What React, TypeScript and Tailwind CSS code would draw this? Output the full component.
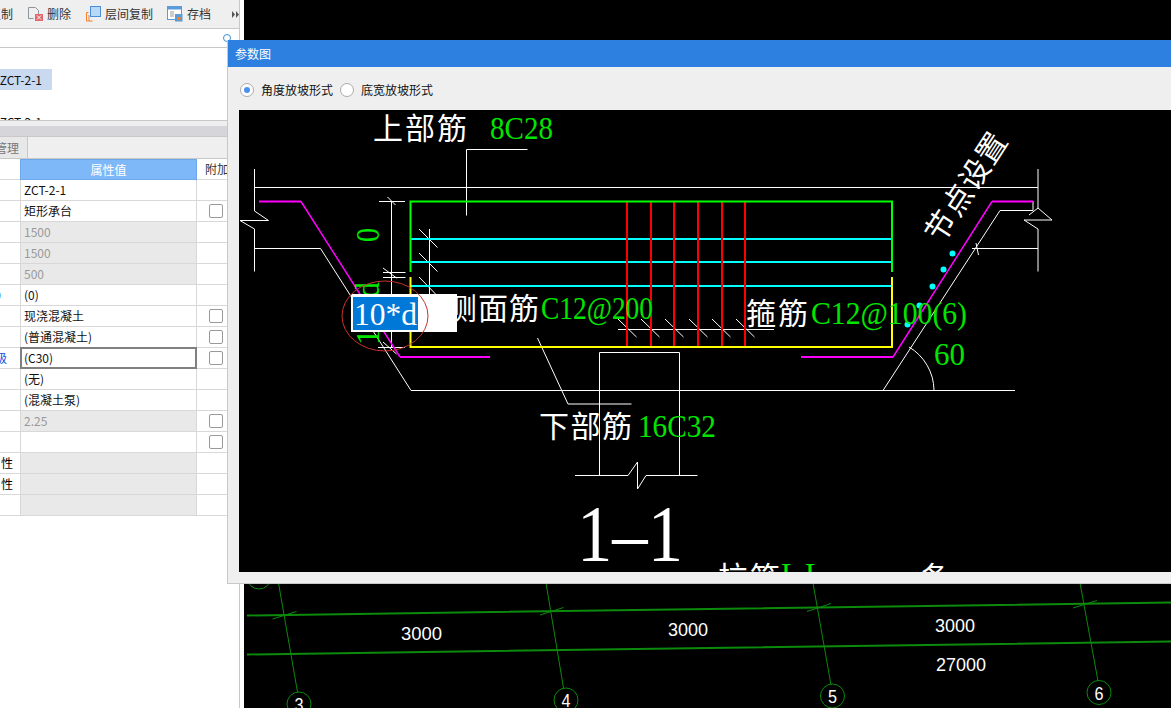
const cjk = "font-['Noto_Sans_CJK_SC','Noto_Sans',sans-serif]";
const serif = "'Liberation Serif','Noto Sans CJK SC',serif";
const cjkSvg = "'Noto Sans CJK SC',serif";

type Row = {
  label?: string;
  labelClass?: string;
  value?: string;
  grey?: boolean;
  check?: boolean;
  active?: boolean;
};

const rows: Row[] = [
  { value: "ZCT-2-1" },
  { value: "矩形承台", check: true },
  { value: "1500", grey: true },
  { value: "1500", grey: true },
  { value: "500", grey: true },
  { label: "0", labelClass: "pr-[19px] text-[#1a50e0]", value: "(0)" },
  { value: "现浇混凝土", check: true },
  { value: "(普通混凝土)", check: true },
  { label: "级", labelClass: "pr-[13px] text-[#1a50e0]", value: "(C30)", check: true, active: true },
  { value: "(无)" },
  { value: "(混凝土泵)" },
  { value: "2.25", grey: true, check: true },
  { value: "", check: true },
  { label: "性", labelClass: "pr-[7px] text-black", value: "", grey: true },
  { label: "性", labelClass: "pr-[7px] text-black", value: "", grey: true },
  { value: "", grey: true },
];

// white linework of the section drawing, in page coordinates
const whiteLines = [
  "M254.5 187.5H1038",
  "M254.5 169V211L268.5 220.5H240L254.5 229V271.5",
  "M254.5 248.5H320.5L411 390.5H1015",
  "M466.5 215.5V149.5H527.5",
  "M391.5 201V347",
  "M379 201.5H405M383 272.5H405.5M383 277.5H405.5M378 347.5H405",
  "M387.5 197L395.5 205M383 268L396.5 278M383 342L396.5 354",
  "M429.5 229V295",
  "M419 229L437.5 247.5M419 253L437.5 271.5M419 277L437.5 296",
  "M618 329.5H774",
  "M618 319L636.5 337M641 319L659.5 337M665 319L683.5 337M689 319L707.5 337M712 319L730.5 337M736 319L754.5 337",
  "M1038 169V208L1052 220H1024L1038 229V271.5M1029 215L1038 208",
  "M972 248.5H1038M976 243L978.5 255",
  "M1033 201V210.5H1000L883 390.5",
  "M909 347A51 51 0 0 1 934 390",
  "M599.5 475V352.5H679.5V475",
  "M575 475.5H628L637.5 462V489L646 475.5H697.5",
  "M537.5 338L568 404H631.5",
];

const redBars = [627, 651, 674, 698, 722, 745];
const cyanBars = [239, 262, 286];
const cyanDots = [
  [952.5, 253.5],
  [943.5, 269.5],
  [932.5, 286.5],
  [919.5, 305.5],
  [907.5, 324.5],
];

const axes = [
  { line: "M278.5 583L297.5 692", tick: "M272.5 619L296.5 611.5", cx: 299, cy: 704, n: "3" },
  { line: "M546 583L563.5 688", tick: "M540 615L563.5 607.5", cx: 566, cy: 700, n: "4" },
  { line: "M813 583L831 685", tick: "M807 611.5L831 603.5", cx: 832.5, cy: 696, n: "5" },
  { line: "M1080 583L1098 681", tick: "M1073 608L1097 600.5", cx: 1099, cy: 692.5, n: "6" },
];

function Toolbar() {
  return (
    <div className="flex h-[29px] shrink-0 items-center overflow-hidden border-b border-[#c8c8c8] bg-[#efefef] text-[12px] text-[#333]">
      <span className="ml-[-11px] w-[39px] shrink-0">复制</span>
      {/* delete */}
      <svg width="15" height="16" viewBox="0 0 15 16" className="shrink-0">
        <path d="M.5 1.5h7l3 3v4M.5 1.5v11h5" fill="none" stroke="#8a979f" />
        <rect x="7" y="8" width="8" height="7" fill="#e0686c" />
        <path d="M9 9.5l4 4M13 9.5l-4 4" stroke="#fff" />
      </svg>
      <span className="ml-[4px] w-[39px] shrink-0">删除</span>
      {/* copy between floors */}
      <svg width="15" height="16" viewBox="0 0 15 16" className="shrink-0">
        <path d="M.5 15V6.5h2M.5 15h6" fill="none" stroke="#f08030" />
        <path d="M3 15V9" stroke="#f08030" />
        <rect x="4.5" y=".5" width="10" height="10" fill="#b8d8f8" stroke="#4a90d8" />
      </svg>
      <span className="ml-[4px] w-[62px] shrink-0">层间复制</span>
      {/* save */}
      <svg width="16" height="16" viewBox="0 0 16 16" className="shrink-0">
        <rect x=".5" y=".5" width="14" height="13" fill="#fff" stroke="#5b9bd8" />
        <rect x="1" y="1" width="13" height="2.5" fill="#5b9bd8" />
        <path d="M3 6h4M3 8h4M3 10h4" stroke="#999" />
        <rect x="8" y="8" width="7.5" height="7.5" fill="#5b9bd8" />
        <rect x="10" y="11" width="3.5" height="3" fill="#f08030" />
      </svg>
      <span className="ml-[4px] w-[45px] shrink-0">存档</span>
      <svg width="7" height="7" viewBox="0 0 7 7" className="shrink-0">
        <path d="M0 0l3 3.5L0 7zM4 0l3 3.5L4 7z" fill="#555" />
      </svg>
    </div>
  );
}

function PropertyRow({ row }: { row: Row }) {
  const valueClass = row.active
    ? "relative -ml-px -mt-px h-[22px] w-[177px] border-2 border-[#808080] bg-white pl-[2px] text-[#111]"
    : `w-[176px] border-r border-[#d8d8d8] pl-[3px] ${row.grey ? "bg-[#e9e9e9] text-[#999]" : "text-[#111]"}`;

  return (
    <div className="flex h-[21px] border-b border-[#d8d8d8]">
      <div
        className={`flex w-[21px] shrink-0 items-center justify-end overflow-hidden border-r border-[#d8d8d8] whitespace-nowrap ${row.labelClass ?? ""}`}
      >
        {row.label}
      </div>
      <div className={`flex shrink-0 items-center ${valueClass}`}>{row.value}</div>
      <div className="flex flex-1 items-center pl-[12px]">
        {row.check && <span className="h-[14px] w-[14px] rounded-[2px] border border-[#999] bg-white" />}
      </div>
    </div>
  );
}

function LeftPanel() {
  return (
    <aside className={`flex h-full w-[240px] shrink-0 flex-col border-r border-[#c8c8c8] bg-white text-[12px] ${cjk}`}>
      <Toolbar />
      <div className="flex h-[19px] shrink-0 items-center justify-end border-b border-[#c8c8c8] pr-[8px]">
        <span className="h-[8px] w-[8px] rounded-full border border-[#3f8fd0]" />
      </div>
      <div className="h-[73px] shrink-0 overflow-hidden border-b border-[#c8c8c8] pt-[21px] text-[#111]">
        <div className="flex h-[21px] w-[52px] items-center justify-end bg-[#c8d9f0] pr-[10px] whitespace-nowrap">ZCT-2-1</div>
        <div className="mt-[23px] flex w-[52px] justify-end pr-[10px] whitespace-nowrap">ZCT-2-1</div>
      </div>
      <div className="h-[5px] shrink-0 bg-[#efefef]" />
      <div className="h-[11px] shrink-0 border-b border-[#c8c8c8] bg-[#d5d5da]" />
      <div className="flex h-[22px] shrink-0 border-b border-[#c8c8c8] bg-[#efefef]">
        <div className="flex w-[28px] items-center justify-end overflow-hidden border-r border-[#c8c8c8] bg-[#e8e8e8] pr-[8px] whitespace-nowrap text-[#777]">
          管理
        </div>
      </div>
      <div className="flex h-[21px] shrink-0">
        <div className="w-[20px] shrink-0 border-b border-[#d8d8d8]" />
        <div className="flex w-[177px] shrink-0 items-center justify-center border border-[#6fa8e8] bg-[#7fb8f8] text-white">属性值</div>
        <div className="flex-1 border-b border-[#d8d8d8] pl-[8px] leading-[20px] whitespace-nowrap text-[#333]">附加</div>
      </div>
      {rows.map((row, i) => (
        <PropertyRow key={i} row={row} />
      ))}
    </aside>
  );
}

function AxisPlan() {
  return (
    <svg viewBox="244 0 927 708" className="block h-full w-full">
      <g fill="none" stroke="#0c8a0c">
        <path d="M247 615.5L1171 602.5M247 654.5L1171 641.5" strokeWidth="2" />
        {axes.map((a) => (
          <g key={a.n}>
            <path d={a.line} />
            <path d={a.tick} />
            <circle cx={a.cx} cy={a.cy} r="12" />
          </g>
        ))}
        <circle cx="259" cy="577" r="12" />
      </g>
      <g fill="#fff" fontFamily="'Liberation Sans',sans-serif" fontSize="19">
        <text x="401" y="640" textLength="41" lengthAdjust="spacingAndGlyphs">3000</text>
        <text x="668" y="636" textLength="40" lengthAdjust="spacingAndGlyphs">3000</text>
        <text x="935" y="632" textLength="40" lengthAdjust="spacingAndGlyphs">3000</text>
        <text x="936" y="671" textLength="50" lengthAdjust="spacingAndGlyphs">27000</text>
        {axes.map((a) => (
          <text key={a.n} x={a.cx - 4.5} y={a.cy + 7} textLength="9" lengthAdjust="spacingAndGlyphs">{a.n}</text>
        ))}
      </g>
    </svg>
  );
}

function SectionDrawing() {
  return (
    <svg viewBox="239 110 932 462" className="block h-[462px] w-[932px] shrink-0 bg-black">
      <g fill="none" stroke="#fff">
        {whiteLines.map((d) => (
          <path key={d} d={d} />
        ))}
      </g>
      <path d="M259 201.5H301M400 357H490M801 357H893M992 201.5H1033" fill="none" stroke="#ff00ff" strokeWidth="2" />
      <path d="M301 201.5L400 357M893 357L992 201.5" fill="none" stroke="#ff00ff" strokeWidth="1.5" />
      {cyanBars.map((y) => (
        <path key={y} d={`M410 ${y}H892`} stroke="#00ffff" strokeWidth="2" />
      ))}
      {redBars.map((x) => (
        <path key={x} d={`M${x} 201V347`} stroke="#ff0000" strokeWidth="2" />
      ))}
      <path d="M410.5 272V201.5H892V272" fill="none" stroke="#00ff00" strokeWidth="2" />
      <path d="M410.5 277V347H892V277" fill="none" stroke="#ffff00" strokeWidth="2" />
      {cyanDots.map(([x, y]) => (
        <circle key={x} cx={x} cy={y} r="3" fill="#00ffff" />
      ))}

      <g fill="#fff" fontFamily={cjkSvg} fontSize="30">
        <text x="373" y="139" textLength="94">上部筋</text>
        <text x="447" y="319" textLength="92">侧面筋</text>
        <text x="746" y="324" textLength="62">箍筋</text>
        <text x="539" y="437" textLength="93">下部筋</text>
        <text x="718" y="588" textLength="62">拉筋</text>
        <text x="920" y="588">条</text>
        <text x="967" y="197" textAnchor="middle" letterSpacing="1" transform="rotate(-57 967 187)">节点设置</text>
      </g>
      <g fill="#00e600" fontFamily={serif} fontSize="31">
        <text x="490" y="139" textLength="63" lengthAdjust="spacingAndGlyphs">8C28</text>
        <text x="541" y="319" textLength="112" lengthAdjust="spacingAndGlyphs">C12@200</text>
        <text x="811" y="324" textLength="156" lengthAdjust="spacingAndGlyphs">C12@100(6)</text>
        <text x="934" y="365" textLength="31" lengthAdjust="spacingAndGlyphs">60</text>
        <text x="638" y="437" textLength="78" lengthAdjust="spacingAndGlyphs">16C32</text>
        <text x="781" y="585" letterSpacing="5">LL</text>
        <text x="379" y="242" fontSize="33" textLength="14" lengthAdjust="spacingAndGlyphs" transform="rotate(-90 379 242)">0</text>
        <text x="379" y="345" fontSize="33" textLength="63" lengthAdjust="spacingAndGlyphs" transform="rotate(-90 379 345)">10*d</text>
      </g>
      <text x="577" y="561" fill="#fff" fontFamily={serif} fontSize="80" textLength="106" lengthAdjust="spacingAndGlyphs">1–1</text>

      {/* in-place dimension editor */}
      <rect x="351" y="294" width="106" height="38" fill="#fff" />
      <rect x="353" y="297" width="65" height="33" fill="#0078d7" />
      <text x="354" y="325" fill="#fff" fontFamily={serif} fontSize="31" textLength="63" lengthAdjust="spacingAndGlyphs">10*d</text>
      <ellipse cx="385" cy="316" rx="43" ry="35" fill="none" stroke="#c83232" />
    </svg>
  );
}

function ParamDialog() {
  return (
    <div className={`absolute top-[40px] left-[227px] flex h-[544px] w-[944px] flex-col border-b border-l border-[#c8c8c8] bg-[#efefef] ${cjk}`}>
      <div className="flex h-[27px] shrink-0 items-center bg-[#2d7fe0] pl-[7px] text-[12px] text-white">参数图</div>
      <div className="flex h-[43px] shrink-0 items-center pt-[2px] pl-[12px] text-[12px] text-[#111]">
        <span className="flex h-[14px] w-[14px] items-center justify-center rounded-full border border-[#aaa] bg-white">
          <span className="h-[6px] w-[6px] rounded-full bg-[#4a90f0]" />
        </span>
        <span className="ml-[7px]">角度放坡形式</span>
        <span className="ml-[7px] h-[14px] w-[14px] rounded-full border border-[#aaa] bg-white" />
        <span className="ml-[7px]">底宽放坡形式</span>
      </div>
      <div className="pl-[11px]">
        <SectionDrawing />
      </div>
    </div>
  );
}

export default function App() {
  return (
    <div className="relative flex h-[708px] w-[1171px] overflow-hidden bg-white">
      <LeftPanel />
      <div className="w-[4px] shrink-0 bg-white" />
      <main className="flex-1 bg-black">
        <AxisPlan />
      </main>
      <ParamDialog />
    </div>
  );
}
